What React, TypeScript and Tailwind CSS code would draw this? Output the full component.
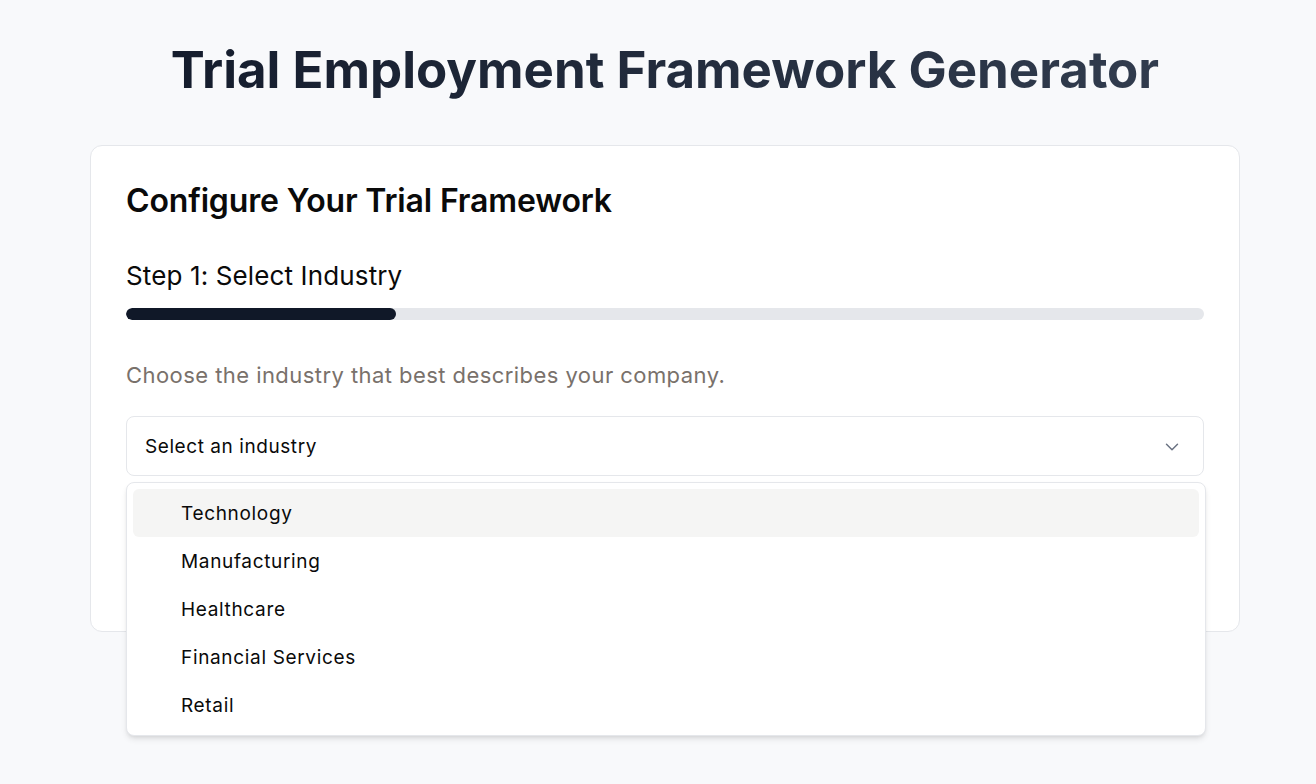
import { ChevronDown } from "lucide-react";

const industries = [
  "Technology",
  "Manufacturing",
  "Healthcare",
  "Financial Services",
  "Retail",
];

export default function App() {
  const progress = 25;
  return (
    <div
      className="min-h-screen bg-[#f8f9fb] pt-[40px]"
      style={{ fontFamily: "Inter, 'Noto Sans', sans-serif" }}
    >
      <div className="pl-[14px]">
        <h1 className="text-center text-[51px] font-bold leading-[60px] bg-gradient-to-r from-gray-900 to-gray-700 bg-clip-text text-transparent">
          Trial Employment Framework Generator
        </h1>
      </div>

      <div className="relative ml-[90px] mt-[45px] w-[1150px] h-[487px] rounded-xl border border-gray-200 bg-white px-[35px] pt-[37px]">
        <h2 className="text-[32px] font-semibold leading-9 tracking-[-0.005em] text-[#0a0a0a]">
          Configure Your Trial Framework
        </h2>

        <h3 className="mt-[41px] text-[26px] font-normal leading-8 tracking-[0.005em] text-[#0a0a0a]">
          Step 1: Select Industry
        </h3>
        <div className="mt-[16px] h-3 w-full overflow-hidden rounded-full bg-gray-200">
          <div className="h-full rounded-full bg-gray-900" style={{ width: `${progress}%` }} />
        </div>

        <p className="mt-[41px] text-[22px] leading-7 tracking-[0.02em] text-stone-500">
          Choose the industry that best describes your company.
        </p>

        <div className="relative mt-[27px]">
          <button className="flex h-[60px] w-full items-center justify-between rounded-lg border border-gray-200 bg-white pl-[18px] pr-[20px] pt-[2px] text-[19px] tracking-[0.03em] text-[#0a0a0a]">
            <span>Select an industry</span>
            <ChevronDown className="h-[22px] w-[22px] text-gray-500" strokeWidth={1.6} />
          </button>

          <div className="absolute left-0 top-[66px] z-10 w-[1080px] rounded-lg border border-gray-200 bg-white p-[6px] shadow-md">
            {industries.map((item, index) => (
              <div
                key={item}
                className={
                  "flex h-12 items-center rounded-md pl-[48px] pt-[2px] text-[19px] tracking-[0.035em] text-[#0a0a0a] " +
                  (index === 0 ? "bg-stone-100" : "")
                }
              >
                {item}
              </div>
            ))}
          </div>
        </div>
      </div>
    </div>
  );
}
